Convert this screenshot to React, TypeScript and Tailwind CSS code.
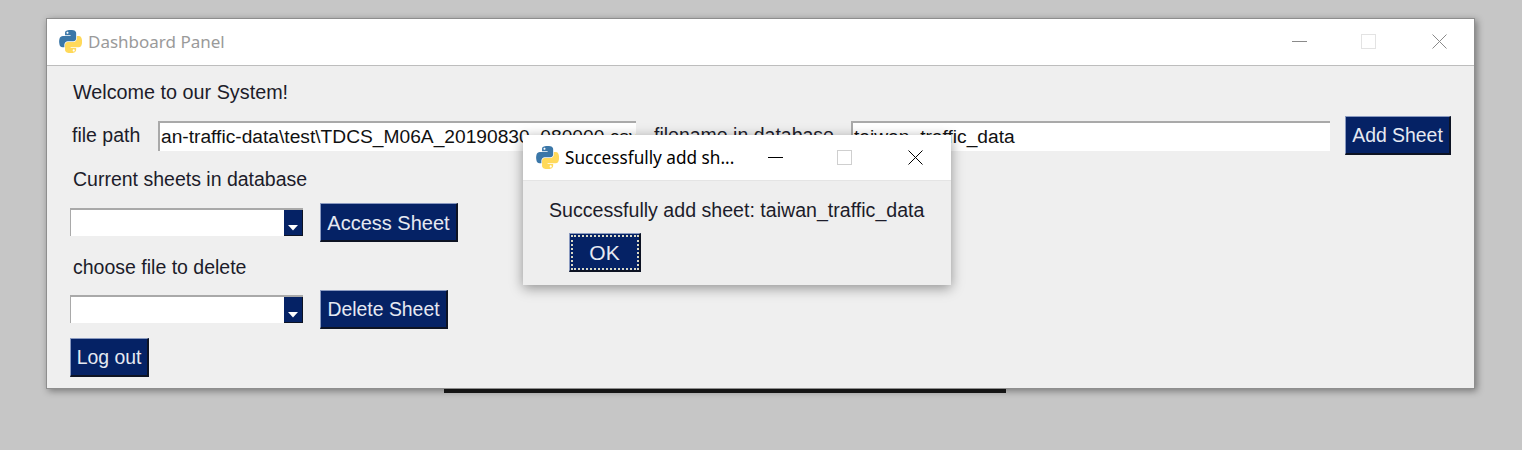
function PythonLogo({ className }: { className: string }) {
  return (
    <svg viewBox="0 0 110 111" className={className}>
      <path
        fill="#3b77a8"
        d="M54.918,0.001c-4.584,0.021-8.961,0.412-12.812,1.094C30.760,3.099,28.701,7.295,28.701,15.032v10.219h26.812v3.406H28.701H18.638c-7.792,0-14.616,4.684-16.750,13.594c-2.462,10.213-2.571,16.586,0,27.25c1.906,7.938,6.458,13.594,14.250,13.594h9.219v-12.250c0-8.850,7.657-16.656,16.750-16.656h26.781c7.455,0,13.406-6.138,13.406-13.625V15.032c0-7.266-6.130-12.725-13.406-13.937C64.282,0.328,59.502-0.020,54.918,0.001z M40.418,8.219c2.770,0,5.031,2.299,5.031,5.125c0,2.816-2.262,5.094-5.031,5.094c-2.779,0-5.031-2.277-5.031-5.094C35.387,10.518,37.639,8.219,40.418,8.219z"
      />
      <path
        fill="#ffd95a"
        d="M85.637,28.657v11.906c0,9.231-7.826,17-16.750,17H42.106c-7.336,0-13.406,6.278-13.406,13.625v25.531c0,7.266,6.319,11.540,13.406,13.625c8.487,2.496,16.626,2.947,26.781,0c6.750-1.954,13.406-5.888,13.406-13.625V86.500H55.512v-3.406h26.781h13.406c7.792,0,10.696-5.435,13.406-13.594c2.799-8.399,2.680-16.476,0-27.250c-1.926-7.757-5.604-13.594-13.406-13.594H85.637z M70.574,93.313c2.779,0,5.031,2.277,5.031,5.094c0,2.826-2.252,5.125-5.031,5.125c-2.770,0-5.031-2.299-5.031-5.125C65.543,95.590,67.804,93.313,70.574,93.313z"
      />
    </svg>
  );
}

// caption buttons, same spacing on main window and dialog
function WindowControls({ line, box, className }: { line: string; box: string; className: string }) {
  return (
    <div className={`ml-auto flex items-center ${className}`}>
      <svg width="15" height="15" viewBox="0 0 15 15">
        <path d="M0 7.5H15" stroke={line} fill="none" />
      </svg>
      <svg width="15" height="15" viewBox="0 0 15 15" className="ml-[54px]">
        <rect x="0.5" y="0.5" width="14" height="14" fill="none" stroke={box} />
      </svg>
      <svg width="15" height="15" viewBox="0 0 15 15" className="ml-[56px]">
        <path d="M0.5 0.5L14.5 14.5M14.5 0.5L0.5 14.5" stroke={line} fill="none" />
      </svg>
    </div>
  );
}

function TkButton({ label, className }: { label: string; className: string }) {
  return (
    <button
      className={`h-[39px] pt-[1px] bg-[#052265] text-[#e6e9f2] leading-none border-t border-l border-b-2 border-r-2 border-t-[#8a9ac0] border-l-[#8a9ac0] border-b-[#0d1323] border-r-[#0d1323] ${className}`}
    >
      {label}
    </button>
  );
}

function TkEntry({ value, className }: { value: string; className: string }) {
  return (
    <div
      className={`h-[30px] bg-white border-t-2 border-l-2 border-[#a9a9a9] overflow-hidden whitespace-nowrap text-[19.2px] leading-[27px] text-[#111] pl-[1px] ${className}`}
    >
      {value}
    </div>
  );
}

function TkCombo() {
  return (
    <div className="mt-[5px] w-[233px] h-[28px] bg-white border-t-2 border-l-[1px] border-[#a9a9a9] flex justify-end">
      <div className="w-[19px] h-full bg-[#052265] border-b border-r border-[#0d1323] flex items-end justify-center pb-[4px]">
        <svg width="10" height="6" viewBox="0 0 10 6">
          <path d="M0 0H10L5 5.5Z" fill="#ffffff" />
        </svg>
      </div>
    </div>
  );
}

export default function App() {
  return (
    <div className="relative h-[450px] w-[1522px] overflow-hidden bg-[#c6c6c6] pt-[18px] pl-[46px] font-['Liberation_Sans',Arial,sans-serif]">
      <div className="absolute left-[444px] top-[388px] h-[5px] w-[562px] bg-[#1a1a1a]" />

      <div className="relative w-[1429px] h-[371px] bg-[#efefef] border border-[#8e8e8e] shadow-[2px_2px_7px_rgba(0,0,0,0.4)]">
        <div className="h-[47px] bg-white border-b border-[#bdbdbd] flex items-center pl-[12px] pb-[1px]">
          <PythonLogo className="w-[23px] h-[23px]" />
          <span className="ml-[6px] text-[17px] text-[#9a9a9a] font-['Noto_Sans',sans-serif]">
            Dashboard Panel
          </span>
          <WindowControls line="#8a8a8a" box="#e3e3e3" className="pr-[27px]" />
        </div>

        <div className="flex flex-col text-[19.5px] text-[#1c1c2a] pl-[23px] pt-[14px]">
          <div className="pl-[3px] h-[24px] leading-[24px] text-[19.8px]">Welcome to our System!</div>

          <div className="mt-[12px] flex items-center h-[39px]">
            <span className="w-[88px] pl-[2px]">file path</span>
            <TkEntry
              className="w-[478px]"
              value="an-traffic-data\test\TDCS_M06A_20190830_080000.csv"
            />
            <span className="ml-[18px] w-[197px]">filename in database</span>
            <TkEntry className="w-[479px]" value="taiwan_traffic_data" />
            <TkButton label="Add Sheet" className="ml-[15px] w-[106px] text-[19.4px]" />
          </div>

          <div className="mt-[12px] pl-[3px] h-[24px] leading-[24px]">Current sheets in database</div>

          <div className="mt-[12px] flex items-start h-[39px]">
            <TkCombo />
            <TkButton label="Access Sheet" className="ml-[17px] w-[138px] text-[20px]" />
          </div>

          <div className="mt-[13px] pl-[3px] h-[24px] leading-[24px]">choose file to delete</div>

          <div className="mt-[11px] flex items-start h-[39px]">
            <TkCombo />
            <TkButton label="Delete Sheet" className="ml-[17px] w-[128px] text-[19.4px]" />
          </div>

          <div className="mt-[9px]">
            <TkButton label="Log out" className="w-[79px] text-[19.4px]" />
          </div>
        </div>
      </div>

      <div className="absolute left-[523px] top-[135px] w-[428px] h-[150px] bg-[#eeeeee] shadow-[0_3px_12px_rgba(0,0,0,0.4)]">
        <div className="h-[46px] bg-white border-b border-[#e4e4e4] flex items-center pl-[13px]">
          <PythonLogo className="w-[23px] h-[23px]" />
          <span className="ml-[6px] text-[17.2px] text-black font-['Noto_Sans',sans-serif]">
            Successfully add sh...
          </span>
          <WindowControls line="#000000" box="#cfcfcf" className="pr-[28px]" />
        </div>
        <div className="pl-[26px] pt-[17px] text-[19.6px] leading-[24px] text-[#1c1c2a]">
          Successfully add sheet: taiwan_traffic_data
        </div>
        <div className="pl-[46px] mt-[11px]">
          <button className="relative h-[39px] w-[72px] pt-[1px] bg-[#052265] text-[#e6e9f2] text-[21px] leading-none border-t border-l border-b-2 border-r-2 border-t-[#8a9ac0] border-l-[#8a9ac0] border-b-[#0d1323] border-r-[#0d1323] outline-2 outline-dotted outline-[#d9d9c8] -outline-offset-4">
            OK
          </button>
        </div>
      </div>
    </div>
  );
}
